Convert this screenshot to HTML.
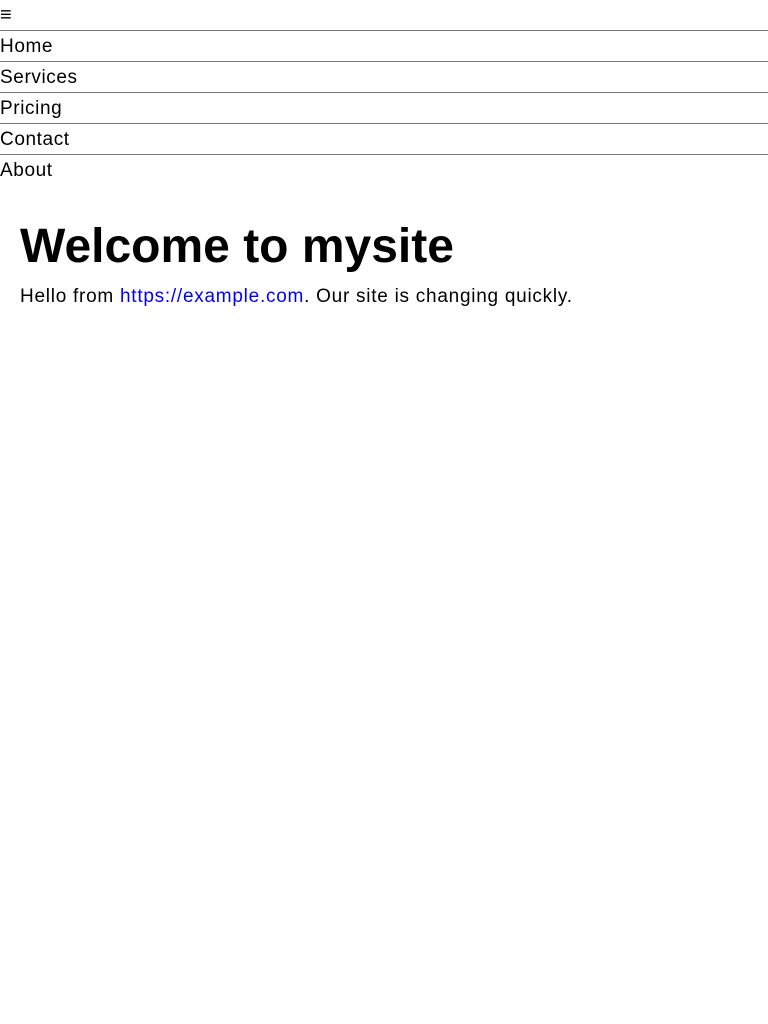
<!DOCTYPE html>
<html><head><style>
body{margin:0;font-family:"Liberation Sans",sans-serif;background:#fff;color:#000;}
.ham{height:30px;font-size:20px;line-height:30px;border-bottom:1px solid #777;font-weight:bold;}
.nav div{height:30px;line-height:32px;font-size:19px;letter-spacing:0.6px;border-bottom:1px solid #777;}
.nav div:last-child{border-bottom:none;}
main{padding:0 20px;}
h1{font-size:48px;font-weight:bold;margin:36px 0 14px;letter-spacing:0px;line-height:52px;}
p{font-size:19px;margin:0;letter-spacing:0.74px;line-height:20px;}
a{color:#00f;text-decoration:none;}
</style></head><body>
<div class="ham">≡</div>
<div class="nav"><div>Home</div><div>Services</div><div>Pricing</div><div>Contact</div><div>About</div></div>
<main><h1>Welcome to mysite</h1>
<p>Hello from <a>https://example.com</a>. Our site is changing quickly.</p></main>
</body></html>
